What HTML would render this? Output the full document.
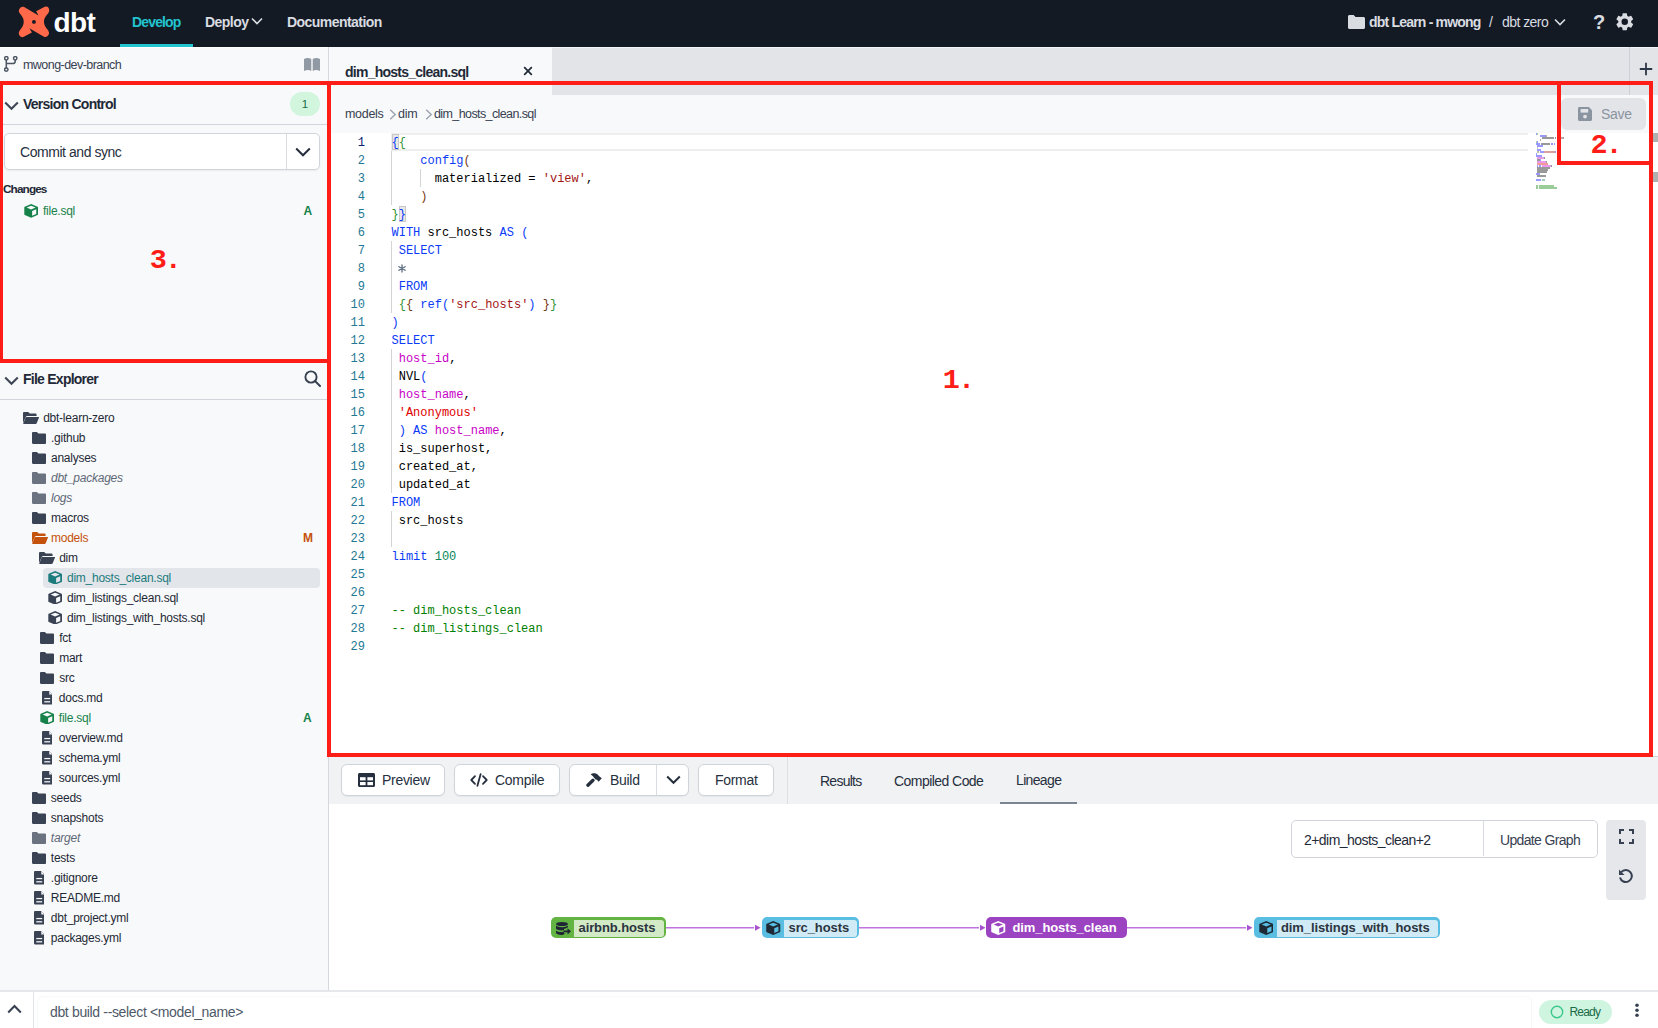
<!DOCTYPE html>
<html><head><meta charset="utf-8">
<style>
*{box-sizing:border-box;margin:0;padding:0}
html,body{width:1658px;height:1028px;overflow:hidden;background:#fff}
body{position:relative;font-family:"Liberation Sans",sans-serif;color:#1f2937}
.a{position:absolute;white-space:nowrap}
.mono{font-family:"Liberation Mono",monospace}
svg{display:block}
/* NAV */
#nav{left:0;top:0;width:1658px;height:47px;background:#131a24}
.navt{font-size:14px;font-weight:bold;color:#d9dce1;letter-spacing:-0.55px;top:13.5px;line-height:16px}
/* sidebar */
#side{left:0;top:47px;width:329px;height:944px;background:#f8f9fa;border-right:1px solid #d5d9de}
.row{position:absolute;left:0;height:20px;width:328px;font-size:12px;line-height:20px;color:#1f2937;letter-spacing:-0.25px;white-space:nowrap}
.row .ic{position:absolute;top:3px}
.row .tx{position:absolute;top:0}
.fold{fill:#3a4353}
.foldi{fill:#6b7380}
/* editor */
.ln{position:absolute;padding-top:1px;left:329px;width:36px;text-align:right;font-size:12px;line-height:18px;color:#237893;font-family:"Liberation Mono",monospace}
.cl{position:absolute;padding-top:1px;left:391.5px;font-size:12px;line-height:18px;color:#000;font-family:"Liberation Mono",monospace;white-space:pre}
.kw{color:#0b3bf7}
.st{color:#a31515}
.br{color:#319331}
.pa{color:#7b3814}
.id{color:#c700c7}
.sr{color:#e00000}
.nu{color:#098658}
.cm{color:#008000}
.gr{color:#777}
.btn{position:absolute;top:764px;height:32px;background:#fff;border:1px solid #cfd4da;border-radius:6px;box-shadow:0 1px 1px rgba(0,0,0,.05)}
.bt{position:absolute;top:7px;font-size:14px;line-height:16px;color:#262f3d;letter-spacing:-0.3px;white-space:nowrap}
.red{position:absolute;background:#ff1d17}
</style></head>
<body>

<!-- ================= NAV ================= -->
<div id="nav" class="a">
  <svg class="a" style="left:14px;top:2px" width="40" height="40" viewBox="0 0 1028 1028"><path fill="#ff694a" d="M250 125L630 345L570 240L790 125Q880 90 905 200Q910 250 880 290Q660 510 880 730Q915 790 890 840Q840 920 770 895L395 675L460 785L240 900Q160 920 130 840Q110 790 145 730Q355 510 145 290Q110 240 130 190Q170 100 250 125Z"/><circle cx="512" cy="512" r="50" fill="#131a24"/></svg>
  <div class="a" style="left:53.5px;top:6px;font-size:28px;font-weight:bold;color:#fff;letter-spacing:-0.6px;line-height:34px">dbt</div>
  <div class="a navt" style="left:132px;color:#22c4cf;letter-spacing:-0.85px">Develop</div>
  <div class="a" style="left:120px;top:44px;width:73px;height:3px;background:#22c4cf"></div>
  <div class="a navt" style="left:205px">Deploy</div>
  <svg class="a" style="left:251px;top:17px" width="12" height="8" viewBox="0 0 12 8"><path d="M1 1.5 L6 6.5 L11 1.5" stroke="#d9dce1" stroke-width="1.6" fill="none"/></svg>
  <div class="a navt" style="left:287px">Documentation</div>

  <svg class="a" style="left:1348px;top:15px" width="17" height="14" viewBox="0 0 17 14"><path fill="#d9dce1" d="M0 1.5C0 .7.7 0 1.5 0h4.2l1.8 2h8C16.3 2 17 2.7 17 3.5v9c0 .8-.7 1.5-1.5 1.5h-14C.7 14 0 13.3 0 12.5z"/></svg>
  <div class="a navt" style="left:1369px;letter-spacing:-0.8px">dbt Learn - mwong</div>
  <div class="a navt" style="left:1489px;font-weight:normal">/</div>
  <div class="a navt" style="left:1502px;font-weight:normal">dbt zero</div>
  <svg class="a" style="left:1554px;top:18px" width="12" height="8" viewBox="0 0 12 8"><path d="M1 1.5 L6 6.5 L11 1.5" stroke="#d9dce1" stroke-width="1.6" fill="none"/></svg>
  <div class="a" style="left:1593px;top:11px;font-size:20px;font-weight:bold;color:#d9dce1;line-height:22px">?</div>
  <svg class="a" style="left:1614px;top:11px" width="21.5" height="21.5" viewBox="0 0 24 24"><path fill="#d9dce1" d="M19.14 12.94c.04-.3.06-.61.06-.94 0-.32-.02-.64-.07-.94l2.03-1.58a.49.49 0 0 0 .12-.61l-1.92-3.32a.49.49 0 0 0-.59-.22l-2.39.96c-.5-.38-1.03-.7-1.62-.94l-.36-2.54a.48.48 0 0 0-.48-.41h-3.84c-.24 0-.43.17-.47.41l-.36 2.54c-.59.24-1.13.57-1.62.94l-2.39-.96a.47.47 0 0 0-.59.22L2.74 8.87c-.12.21-.08.47.12.61l2.03 1.58c-.05.3-.09.63-.09.94s.02.64.07.94l-2.03 1.58a.49.49 0 0 0-.12.61l1.92 3.32c.12.22.37.29.59.22l2.39-.96c.5.38 1.03.7 1.62.94l.36 2.54c.05.24.24.41.48.41h3.84c.24 0 .44-.17.47-.41l.36-2.54c.59-.24 1.13-.56 1.62-.94l2.39.96c.22.08.47 0 .59-.22l1.92-3.32c.12-.22.07-.47-.12-.61l-2.01-1.58zM12 15.6A3.6 3.6 0 1 1 12 8.4a3.6 3.6 0 0 1 0 7.2z"/></svg>
</div>

<!-- ================= SIDEBAR ================= -->
<div id="side" class="a">
  <div class="a" style="left:0;top:0;width:328px;height:1px;background:#fff"></div>
  <svg class="a" style="left:4px;top:9px" width="14" height="17" viewBox="0 0 14 17"><g fill="none" stroke="#4b5563" stroke-width="1.5"><circle cx="2.3" cy="2.3" r="1.7"/><circle cx="2.3" cy="13.6" r="1.7"/><circle cx="11.2" cy="2.3" r="1.7"/><path d="M2.3 4v7.9M11.2 4v1.2Q11.2 7.6 8.6 7.6H2.3"/></g></svg>
  <div class="a" style="left:23px;top:11px;font-size:12.5px;line-height:14px;color:#374151;letter-spacing:-0.55px">mwong-dev-branch</div>
  <svg class="a" style="left:304px;top:11px" width="16" height="13" viewBox="0 0 16 13"><path fill="#9199a4" d="M0 1C2.5-.2 5-.2 7.3 1v12C5 11.8 2.5 11.8 0 13z"/><path fill="#9199a4" d="M16 1c-2.5-1.2-5-1.2-7.3 0v12c2.3-1.2 4.8-1.2 7.3 0z"/></svg>

  <!-- Version control -->
  <svg class="a" style="left:3.5px;top:53.5px" width="15" height="10" viewBox="0 0 15 10"><path d="M1.2 1.5l6.3 6.3 6.3-6.3" stroke="#3f4857" stroke-width="2.1" fill="none"/></svg>
  <div class="a" style="left:23px;top:49px;font-size:14px;font-weight:bold;line-height:16px;color:#1f2937;letter-spacing:-0.75px">Version Control</div>
  <div class="a" style="left:290px;top:45px;width:30px;height:24px;border-radius:12px;background:#d2f5de;font-size:11.5px;line-height:24px;text-align:center;color:#1d6b45">1</div>
  <div class="a" style="left:3px;top:77px;width:325px;height:1px;background:#d1d5db"></div>
  <div class="a" style="left:3.5px;top:86px;width:316px;height:37px;background:#fff;border:1px solid #d1d5db;border-radius:5px;box-shadow:0 1px 2px rgba(0,0,0,.06)"></div>
  <div class="a" style="left:286px;top:87px;width:1px;height:35px;background:#d8dce1"></div>
  <div class="a" style="left:20px;top:97px;font-size:14px;line-height:16px;color:#262f3d;letter-spacing:-0.45px">Commit and sync</div>
  <svg class="a" style="left:295px;top:100px" width="16" height="10" viewBox="0 0 16 10"><path d="M1.2 1.5l6.8 6.8 6.8-6.8" stroke="#262f3d" stroke-width="2" fill="none"/></svg>
  <div class="a" style="left:3px;top:135px;font-size:11.8px;font-weight:bold;line-height:14px;color:#1f2937;letter-spacing:-0.9px">Changes</div>
  <svg class="a" style="left:24px;top:157px" width="14.3" height="13.7" viewBox="0 0 14 14"><path fill="#16824a" d="M7 0L13.5 2.8Q14 3 14 3.6V10.4Q14 11 13.5 11.2L7 14L.5 11.2Q0 11 0 10.4V3.6Q0 3 .5 2.8z"/><path fill="#f8f9fa" d="M7 1.7L11.6 3.6L7 5.5L2.4 3.6z"/><path fill="#f8f9fa" d="M8 7.2L12.2 5.4V10.2L8 12.1z"/></svg>
  <div class="a" style="left:43px;top:157px;font-size:12px;line-height:14px;color:#16824a;letter-spacing:-0.25px">file.sql</div>
  <div class="a" style="left:303.5px;top:157px;font-size:12px;font-weight:bold;line-height:14px;color:#16824a">A</div>
  <div class="a" style="left:149.7px;top:199.3px;font-family:'Liberation Mono',monospace;font-weight:bold;font-size:28.5px;line-height:30px;letter-spacing:-2px;color:#ff1d17">3.</div>

  <!-- File explorer -->
  <svg class="a" style="left:3.5px;top:328.5px" width="15" height="10" viewBox="0 0 15 10"><path d="M1.2 1.5l6.3 6.3 6.3-6.3" stroke="#3f4857" stroke-width="2.1" fill="none"/></svg>
  <div class="a" style="left:23px;top:324px;font-size:14px;font-weight:bold;line-height:16px;color:#1f2937;letter-spacing:-0.75px">File Explorer</div>
  <svg class="a" style="left:304px;top:323px" width="17" height="17" viewBox="0 0 17 17"><circle cx="7" cy="7" r="5.6" stroke="#374151" stroke-width="1.9" fill="none"/><path d="M11 11l5 5" stroke="#374151" stroke-width="2" stroke-linecap="round"/></svg>
  <div class="a" style="left:0;top:352px;width:328px;height:1px;background:#d1d5db"></div>
<div class="row" style="top:361px"><div class="ic" style="left:22.8px;top:4px"><svg width="16" height="12" viewBox="0 0 16 12"><path fill="#3a4353" d="M0 1.2C0 .5.5 0 1.2 0h4l1.6 1.6h5.6c.7 0 1.2.5 1.2 1.2V4H4.2c-.6 0-1.1.3-1.3.8L0 11z"/><path fill="#3a4353" d="M3.4 5h12.2c.3 0 .5.3.4.6l-2.3 5.7c-.2.4-.6.7-1.1.7H.6c-.3 0-.5-.3-.4-.6l2.3-5.7C2.7 5.2 3 5 3.4 5z"/></svg></div><div class="tx" style="left:43.2px;">dbt-learn-zero</div></div>
<div class="row" style="top:381px"><div class="ic" style="left:31.5px;top:4px"><svg width="14.2" height="12" viewBox="0 0 15 12" preserveAspectRatio="none"><path fill="#3a4353" d="M0 1.2C0 .5.5 0 1.2 0h4l1.6 1.6h7C14.5 1.6 15 2.1 15 2.8v8C15 11.5 14.5 12 13.8 12H1.2C.5 12 0 11.5 0 10.8z"/></svg></div><div class="tx" style="left:51.0px;">.github</div></div>
<div class="row" style="top:401px"><div class="ic" style="left:31.5px;top:4px"><svg width="14.2" height="12" viewBox="0 0 15 12" preserveAspectRatio="none"><path fill="#3a4353" d="M0 1.2C0 .5.5 0 1.2 0h4l1.6 1.6h7C14.5 1.6 15 2.1 15 2.8v8C15 11.5 14.5 12 13.8 12H1.2C.5 12 0 11.5 0 10.8z"/></svg></div><div class="tx" style="left:51.0px;">analyses</div></div>
<div class="row" style="top:421px"><div class="ic" style="left:31.5px;top:4px"><svg width="14.2" height="12" viewBox="0 0 15 12" preserveAspectRatio="none"><path fill="#6b7380" d="M0 1.2C0 .5.5 0 1.2 0h4l1.6 1.6h7C14.5 1.6 15 2.1 15 2.8v8C15 11.5 14.5 12 13.8 12H1.2C.5 12 0 11.5 0 10.8z"/></svg></div><div class="tx" style="left:51.0px;font-style:italic;color:#5f6877">dbt_packages</div></div>
<div class="row" style="top:441px"><div class="ic" style="left:31.5px;top:4px"><svg width="14.2" height="12" viewBox="0 0 15 12" preserveAspectRatio="none"><path fill="#6b7380" d="M0 1.2C0 .5.5 0 1.2 0h4l1.6 1.6h7C14.5 1.6 15 2.1 15 2.8v8C15 11.5 14.5 12 13.8 12H1.2C.5 12 0 11.5 0 10.8z"/></svg></div><div class="tx" style="left:51.0px;font-style:italic;color:#5f6877">logs</div></div>
<div class="row" style="top:461px"><div class="ic" style="left:31.5px;top:4px"><svg width="14.2" height="12" viewBox="0 0 15 12" preserveAspectRatio="none"><path fill="#3a4353" d="M0 1.2C0 .5.5 0 1.2 0h4l1.6 1.6h7C14.5 1.6 15 2.1 15 2.8v8C15 11.5 14.5 12 13.8 12H1.2C.5 12 0 11.5 0 10.8z"/></svg></div><div class="tx" style="left:51.0px;">macros</div></div>
<div class="row" style="top:481px"><div class="ic" style="left:31.5px;top:4px"><svg width="16" height="12" viewBox="0 0 16 12"><path fill="#c4510c" d="M0 1.2C0 .5.5 0 1.2 0h4l1.6 1.6h5.6c.7 0 1.2.5 1.2 1.2V4H4.2c-.6 0-1.1.3-1.3.8L0 11z"/><path fill="#c4510c" d="M3.4 5h12.2c.3 0 .5.3.4.6l-2.3 5.7c-.2.4-.6.7-1.1.7H.6c-.3 0-.5-.3-.4-.6l2.3-5.7C2.7 5.2 3 5 3.4 5z"/></svg></div><div class="tx" style="left:51.0px;color:#c4510c">models</div><div class="tx" style="left:303px;font-weight:bold;color:#c4510c">M</div></div>
<div class="row" style="top:501px"><div class="ic" style="left:38.8px;top:4px"><svg width="16" height="12" viewBox="0 0 16 12"><path fill="#3a4353" d="M0 1.2C0 .5.5 0 1.2 0h4l1.6 1.6h5.6c.7 0 1.2.5 1.2 1.2V4H4.2c-.6 0-1.1.3-1.3.8L0 11z"/><path fill="#3a4353" d="M3.4 5h12.2c.3 0 .5.3.4.6l-2.3 5.7c-.2.4-.6.7-1.1.7H.6c-.3 0-.5-.3-.4-.6l2.3-5.7C2.7 5.2 3 5 3.4 5z"/></svg></div><div class="tx" style="left:59.2px;">dim</div></div>
<div class="row" style="top:521px"><div style="position:absolute;left:43px;top:0;width:277px;height:20px;background:#e2e5e9;border-radius:4px"></div><div class="ic" style="left:47.6px;top:2.5px"><svg width="14.3" height="13.7" viewBox="0 0 14 14"><path fill="#1b7b7d" d="M7 0L13.5 2.8Q14 3 14 3.6V10.4Q14 11 13.5 11.2L7 14L.5 11.2Q0 11 0 10.4V3.6Q0 3 .5 2.8z"/><path fill="#e2e5e9" d="M7 1.7L11.6 3.6L7 5.5L2.4 3.6z"/><path fill="#e2e5e9" d="M8 7.2L12.2 5.4V10.2L8 12.1z"/></svg></div><div class="tx" style="left:67.0px;color:#1b7b7d">dim_hosts_clean.sql</div></div>
<div class="row" style="top:541px"><div class="ic" style="left:47.6px;top:2.5px"><svg width="14.3" height="13.7" viewBox="0 0 14 14"><path fill="#3a4353" d="M7 0L13.5 2.8Q14 3 14 3.6V10.4Q14 11 13.5 11.2L7 14L.5 11.2Q0 11 0 10.4V3.6Q0 3 .5 2.8z"/><path fill="#f8f9fa" d="M7 1.7L11.6 3.6L7 5.5L2.4 3.6z"/><path fill="#f8f9fa" d="M8 7.2L12.2 5.4V10.2L8 12.1z"/></svg></div><div class="tx" style="left:67.0px;">dim_listings_clean.sql</div></div>
<div class="row" style="top:561px"><div class="ic" style="left:47.6px;top:2.5px"><svg width="14.3" height="13.7" viewBox="0 0 14 14"><path fill="#3a4353" d="M7 0L13.5 2.8Q14 3 14 3.6V10.4Q14 11 13.5 11.2L7 14L.5 11.2Q0 11 0 10.4V3.6Q0 3 .5 2.8z"/><path fill="#f8f9fa" d="M7 1.7L11.6 3.6L7 5.5L2.4 3.6z"/><path fill="#f8f9fa" d="M8 7.2L12.2 5.4V10.2L8 12.1z"/></svg></div><div class="tx" style="left:67.0px;">dim_listings_with_hosts.sql</div></div>
<div class="row" style="top:581px"><div class="ic" style="left:40.3px;top:4px"><svg width="14.2" height="12" viewBox="0 0 15 12" preserveAspectRatio="none"><path fill="#3a4353" d="M0 1.2C0 .5.5 0 1.2 0h4l1.6 1.6h7C14.5 1.6 15 2.1 15 2.8v8C15 11.5 14.5 12 13.8 12H1.2C.5 12 0 11.5 0 10.8z"/></svg></div><div class="tx" style="left:59.2px;">fct</div></div>
<div class="row" style="top:601px"><div class="ic" style="left:40.3px;top:4px"><svg width="14.2" height="12" viewBox="0 0 15 12" preserveAspectRatio="none"><path fill="#3a4353" d="M0 1.2C0 .5.5 0 1.2 0h4l1.6 1.6h7C14.5 1.6 15 2.1 15 2.8v8C15 11.5 14.5 12 13.8 12H1.2C.5 12 0 11.5 0 10.8z"/></svg></div><div class="tx" style="left:59.2px;">mart</div></div>
<div class="row" style="top:621px"><div class="ic" style="left:40.3px;top:4px"><svg width="14.2" height="12" viewBox="0 0 15 12" preserveAspectRatio="none"><path fill="#3a4353" d="M0 1.2C0 .5.5 0 1.2 0h4l1.6 1.6h7C14.5 1.6 15 2.1 15 2.8v8C15 11.5 14.5 12 13.8 12H1.2C.5 12 0 11.5 0 10.8z"/></svg></div><div class="tx" style="left:59.2px;">src</div></div>
<div class="row" style="top:641px"><div class="ic" style="left:41.7px;top:3px"><svg width="10.5" height="13.5" viewBox="0 0 11 14"><path fill="#3a4353" d="M1.3 0h6L11 3.7v9c0 .7-.6 1.3-1.3 1.3H1.3C.6 14 0 13.4 0 12.7V1.3C0 .6.6 0 1.3 0z"/><path fill="#f8f9fa" d="M7.6 0.3v3.2h3.1z"/><rect x="2.4" y="7.2" width="6.2" height="1.3" fill="#f8f9fa"/><rect x="2.4" y="10.6" width="6.2" height="1.3" fill="#f8f9fa"/></svg></div><div class="tx" style="left:58.8px;">docs.md</div></div>
<div class="row" style="top:661px"><div class="ic" style="left:40.3px;top:2.5px"><svg width="14.3" height="13.7" viewBox="0 0 14 14"><path fill="#16824a" d="M7 0L13.5 2.8Q14 3 14 3.6V10.4Q14 11 13.5 11.2L7 14L.5 11.2Q0 11 0 10.4V3.6Q0 3 .5 2.8z"/><path fill="#f8f9fa" d="M7 1.7L11.6 3.6L7 5.5L2.4 3.6z"/><path fill="#f8f9fa" d="M8 7.2L12.2 5.4V10.2L8 12.1z"/></svg></div><div class="tx" style="left:58.8px;color:#16824a">file.sql</div><div class="tx" style="left:303px;font-weight:bold;color:#16824a">A</div></div>
<div class="row" style="top:681px"><div class="ic" style="left:41.7px;top:3px"><svg width="10.5" height="13.5" viewBox="0 0 11 14"><path fill="#3a4353" d="M1.3 0h6L11 3.7v9c0 .7-.6 1.3-1.3 1.3H1.3C.6 14 0 13.4 0 12.7V1.3C0 .6.6 0 1.3 0z"/><path fill="#f8f9fa" d="M7.6 0.3v3.2h3.1z"/><rect x="2.4" y="7.2" width="6.2" height="1.3" fill="#f8f9fa"/><rect x="2.4" y="10.6" width="6.2" height="1.3" fill="#f8f9fa"/></svg></div><div class="tx" style="left:58.8px;">overview.md</div></div>
<div class="row" style="top:701px"><div class="ic" style="left:41.7px;top:3px"><svg width="10.5" height="13.5" viewBox="0 0 11 14"><path fill="#3a4353" d="M1.3 0h6L11 3.7v9c0 .7-.6 1.3-1.3 1.3H1.3C.6 14 0 13.4 0 12.7V1.3C0 .6.6 0 1.3 0z"/><path fill="#f8f9fa" d="M7.6 0.3v3.2h3.1z"/><rect x="2.4" y="7.2" width="6.2" height="1.3" fill="#f8f9fa"/><rect x="2.4" y="10.6" width="6.2" height="1.3" fill="#f8f9fa"/></svg></div><div class="tx" style="left:58.8px;">schema.yml</div></div>
<div class="row" style="top:721px"><div class="ic" style="left:41.7px;top:3px"><svg width="10.5" height="13.5" viewBox="0 0 11 14"><path fill="#3a4353" d="M1.3 0h6L11 3.7v9c0 .7-.6 1.3-1.3 1.3H1.3C.6 14 0 13.4 0 12.7V1.3C0 .6.6 0 1.3 0z"/><path fill="#f8f9fa" d="M7.6 0.3v3.2h3.1z"/><rect x="2.4" y="7.2" width="6.2" height="1.3" fill="#f8f9fa"/><rect x="2.4" y="10.6" width="6.2" height="1.3" fill="#f8f9fa"/></svg></div><div class="tx" style="left:58.8px;">sources.yml</div></div>
<div class="row" style="top:741px"><div class="ic" style="left:31.8px;top:4px"><svg width="14.2" height="12" viewBox="0 0 15 12" preserveAspectRatio="none"><path fill="#3a4353" d="M0 1.2C0 .5.5 0 1.2 0h4l1.6 1.6h7C14.5 1.6 15 2.1 15 2.8v8C15 11.5 14.5 12 13.8 12H1.2C.5 12 0 11.5 0 10.8z"/></svg></div><div class="tx" style="left:50.8px;">seeds</div></div>
<div class="row" style="top:761px"><div class="ic" style="left:31.8px;top:4px"><svg width="14.2" height="12" viewBox="0 0 15 12" preserveAspectRatio="none"><path fill="#3a4353" d="M0 1.2C0 .5.5 0 1.2 0h4l1.6 1.6h7C14.5 1.6 15 2.1 15 2.8v8C15 11.5 14.5 12 13.8 12H1.2C.5 12 0 11.5 0 10.8z"/></svg></div><div class="tx" style="left:50.8px;">snapshots</div></div>
<div class="row" style="top:781px"><div class="ic" style="left:31.8px;top:4px"><svg width="14.2" height="12" viewBox="0 0 15 12" preserveAspectRatio="none"><path fill="#6b7380" d="M0 1.2C0 .5.5 0 1.2 0h4l1.6 1.6h7C14.5 1.6 15 2.1 15 2.8v8C15 11.5 14.5 12 13.8 12H1.2C.5 12 0 11.5 0 10.8z"/></svg></div><div class="tx" style="left:50.8px;font-style:italic;color:#5f6877">target</div></div>
<div class="row" style="top:801px"><div class="ic" style="left:31.8px;top:4px"><svg width="14.2" height="12" viewBox="0 0 15 12" preserveAspectRatio="none"><path fill="#3a4353" d="M0 1.2C0 .5.5 0 1.2 0h4l1.6 1.6h7C14.5 1.6 15 2.1 15 2.8v8C15 11.5 14.5 12 13.8 12H1.2C.5 12 0 11.5 0 10.8z"/></svg></div><div class="tx" style="left:50.8px;">tests</div></div>
<div class="row" style="top:821px"><div class="ic" style="left:33.8px;top:3px"><svg width="10.5" height="13.5" viewBox="0 0 11 14"><path fill="#3a4353" d="M1.3 0h6L11 3.7v9c0 .7-.6 1.3-1.3 1.3H1.3C.6 14 0 13.4 0 12.7V1.3C0 .6.6 0 1.3 0z"/><path fill="#f8f9fa" d="M7.6 0.3v3.2h3.1z"/><rect x="2.4" y="7.2" width="6.2" height="1.3" fill="#f8f9fa"/><rect x="2.4" y="10.6" width="6.2" height="1.3" fill="#f8f9fa"/></svg></div><div class="tx" style="left:50.8px;">.gitignore</div></div>
<div class="row" style="top:841px"><div class="ic" style="left:33.8px;top:3px"><svg width="10.5" height="13.5" viewBox="0 0 11 14"><path fill="#3a4353" d="M1.3 0h6L11 3.7v9c0 .7-.6 1.3-1.3 1.3H1.3C.6 14 0 13.4 0 12.7V1.3C0 .6.6 0 1.3 0z"/><path fill="#f8f9fa" d="M7.6 0.3v3.2h3.1z"/><rect x="2.4" y="7.2" width="6.2" height="1.3" fill="#f8f9fa"/><rect x="2.4" y="10.6" width="6.2" height="1.3" fill="#f8f9fa"/></svg></div><div class="tx" style="left:50.8px;">README.md</div></div>
<div class="row" style="top:861px"><div class="ic" style="left:33.8px;top:3px"><svg width="10.5" height="13.5" viewBox="0 0 11 14"><path fill="#3a4353" d="M1.3 0h6L11 3.7v9c0 .7-.6 1.3-1.3 1.3H1.3C.6 14 0 13.4 0 12.7V1.3C0 .6.6 0 1.3 0z"/><path fill="#f8f9fa" d="M7.6 0.3v3.2h3.1z"/><rect x="2.4" y="7.2" width="6.2" height="1.3" fill="#f8f9fa"/><rect x="2.4" y="10.6" width="6.2" height="1.3" fill="#f8f9fa"/></svg></div><div class="tx" style="left:50.8px;">dbt_project.yml</div></div>
<div class="row" style="top:881px"><div class="ic" style="left:33.8px;top:3px"><svg width="10.5" height="13.5" viewBox="0 0 11 14"><path fill="#3a4353" d="M1.3 0h6L11 3.7v9c0 .7-.6 1.3-1.3 1.3H1.3C.6 14 0 13.4 0 12.7V1.3C0 .6.6 0 1.3 0z"/><path fill="#f8f9fa" d="M7.6 0.3v3.2h3.1z"/><rect x="2.4" y="7.2" width="6.2" height="1.3" fill="#f8f9fa"/><rect x="2.4" y="10.6" width="6.2" height="1.3" fill="#f8f9fa"/></svg></div><div class="tx" style="left:50.8px;">packages.yml</div></div>
</div>


<!-- ================= MAIN ================= -->
<div class="a" style="left:329px;top:47px;width:1329px;height:48px;background:#e2e4e8"></div>
<div class="a" style="left:329px;top:47px;width:1329px;height:1px;background:#f3f4f6"></div>
<div class="a" style="left:329px;top:47px;width:223px;height:48px;background:#f8f9fa"></div>
<div class="a" style="left:345px;top:64px;font-size:14px;font-weight:bold;line-height:16px;color:#1f2937;letter-spacing:-0.75px">dim_hosts_clean.sql</div>
<svg class="a" style="left:523px;top:66px" width="10" height="10" viewBox="0 0 10 10"><path d="M1.2 1.2l7.6 7.6M8.8 1.2l-7.6 7.6" stroke="#1f2937" stroke-width="1.7"/></svg>
<div class="a" style="left:1629px;top:47px;width:1px;height:48px;background:#cdd1d7"></div>
<svg class="a" style="left:1639px;top:62px" width="14" height="14" viewBox="0 0 14 14"><path d="M7 .8v12.4M.8 7h12.4" stroke="#2d3748" stroke-width="1.8"/></svg>

<!-- breadcrumb bar -->
<div class="a" style="left:329px;top:95px;width:1329px;height:38px;background:#f8f9fa"></div>
<div class="a" style="left:345px;top:107px;font-size:12.5px;line-height:14px;color:#374151;letter-spacing:-0.3px">models</div>
<svg class="a" style="left:389px;top:109px" width="8" height="11" viewBox="0 0 8 11"><path d="M1.2 .8l5 4.7-5 4.7" stroke="#9ca3af" stroke-width="1.4" fill="none"/></svg>
<div class="a" style="left:398px;top:107px;font-size:12.5px;line-height:14px;color:#374151;letter-spacing:-0.3px">dim</div>
<svg class="a" style="left:425px;top:109px" width="8" height="11" viewBox="0 0 8 11"><path d="M1.2 .8l5 4.7-5 4.7" stroke="#9ca3af" stroke-width="1.4" fill="none"/></svg>
<div class="a" style="left:434px;top:107px;font-size:12.5px;line-height:14px;color:#374151;letter-spacing:-0.6px">dim_hosts_clean.sql</div>

<!-- save -->
<div class="a" style="left:1561px;top:98px;width:85px;height:32px;background:#e2e4e8;border-radius:6px"></div>
<svg class="a" style="left:1578px;top:107px" width="14" height="14" viewBox="0 0 14 14"><path fill="#8a93a0" d="M1.5 0h9.3L14 3.2v9.3c0 .8-.7 1.5-1.5 1.5h-11C.7 14 0 13.3 0 12.5v-11C0 .7.7 0 1.5 0z"/><rect x="2.6" y="2" width="7.6" height="3.6" fill="#e2e4e8"/><circle cx="7" cy="9.6" r="1.9" fill="#e2e4e8"/></svg>
<div class="a" style="left:1601px;top:106px;font-size:14px;line-height:16px;color:#8a93a0;letter-spacing:-0.3px">Save</div>

<!-- editor -->
<div class="a" style="left:329px;top:133px;width:1329px;height:624px;background:#fff"></div>
<div class="a" style="left:391px;top:133px;width:1137px;height:18px;border:2px solid #eeeeee;border-right:none"></div>
<div class="a" style="left:391.5px;top:134px;width:7px;height:16px;background:#e8e8e8;border:1px solid #c8c8c8"></div>
<div class="a" style="left:398.7px;top:206px;width:7px;height:16px;background:#e8e8e8;border:1px solid #c8c8c8"></div>
<div class="ln" style="top:133px;color:#0b216f">1</div>
<div class="cl" style="top:133px"><span class="bx kw">{</span><span class="br">{</span></div>
<div class="ln" style="top:151px;color:#237893">2</div>
<div class="cl" style="top:151px">    <span class="kw">config</span><span class="pa">(</span></div>
<div class="ln" style="top:169px;color:#237893">3</div>
<div class="cl" style="top:169px">      materialized = <span class="st">'view'</span>,</div>
<div class="ln" style="top:187px;color:#237893">4</div>
<div class="cl" style="top:187px">    <span class="pa">)</span></div>
<div class="ln" style="top:205px;color:#237893">5</div>
<div class="cl" style="top:205px"><span class="br">}</span><span class="bx kw">}</span></div>
<div class="ln" style="top:223px;color:#237893">6</div>
<div class="cl" style="top:223px"><span class="kw">WITH</span> src_hosts <span class="kw">AS</span> <span class="kw">(</span></div>
<div class="ln" style="top:241px;color:#237893">7</div>
<div class="cl" style="top:241px"> <span class="kw">SELECT</span></div>
<div class="ln" style="top:259px;color:#237893">8</div>
<div class="cl" style="top:259px"> </div>
<div class="ln" style="top:277px;color:#237893">9</div>
<div class="cl" style="top:277px"> <span class="kw">FROM</span></div>
<div class="ln" style="top:295px;color:#237893">10</div>
<div class="cl" style="top:295px"> <span class="br">{</span><span class="pa">{</span> <span class="kw">ref(</span><span class="st">'src_hosts'</span><span class="kw">)</span> <span class="pa">}</span><span class="br">}</span></div>
<div class="ln" style="top:313px;color:#237893">11</div>
<div class="cl" style="top:313px"><span class="kw">)</span></div>
<div class="ln" style="top:331px;color:#237893">12</div>
<div class="cl" style="top:331px"><span class="kw">SELECT</span></div>
<div class="ln" style="top:349px;color:#237893">13</div>
<div class="cl" style="top:349px"> <span class="id">host_id</span>,</div>
<div class="ln" style="top:367px;color:#237893">14</div>
<div class="cl" style="top:367px"> NVL<span class="kw">(</span></div>
<div class="ln" style="top:385px;color:#237893">15</div>
<div class="cl" style="top:385px"> <span class="id">host_name</span>,</div>
<div class="ln" style="top:403px;color:#237893">16</div>
<div class="cl" style="top:403px"> <span class="sr">'Anonymous'</span></div>
<div class="ln" style="top:421px;color:#237893">17</div>
<div class="cl" style="top:421px"> <span class="kw">)</span> <span class="kw">AS</span> <span class="id">host_name</span>,</div>
<div class="ln" style="top:439px;color:#237893">18</div>
<div class="cl" style="top:439px"> is_superhost,</div>
<div class="ln" style="top:457px;color:#237893">19</div>
<div class="cl" style="top:457px"> created_at,</div>
<div class="ln" style="top:475px;color:#237893">20</div>
<div class="cl" style="top:475px"> updated_at</div>
<div class="ln" style="top:493px;color:#237893">21</div>
<div class="cl" style="top:493px"><span class="kw">FROM</span></div>
<div class="ln" style="top:511px;color:#237893">22</div>
<div class="cl" style="top:511px"> src_hosts</div>
<div class="ln" style="top:529px;color:#237893">23</div>
<div class="ln" style="top:547px;color:#237893">24</div>
<div class="cl" style="top:547px"><span class="kw">limit</span> <span class="nu">100</span></div>
<div class="ln" style="top:565px;color:#237893">25</div>
<div class="ln" style="top:583px;color:#237893">26</div>
<div class="ln" style="top:601px;color:#237893">27</div>
<div class="cl" style="top:601px"><span class="cm">-- dim_hosts_clean</span></div>
<div class="ln" style="top:619px;color:#237893">28</div>
<div class="cl" style="top:619px"><span class="cm">-- dim_listings_clean</span></div>
<div class="ln" style="top:637px;color:#237893">29</div>
<div class="a" style="left:391.0px;top:151px;width:1px;height:54px;background:#d4d4d4"></div>
<div class="a" style="left:419.8px;top:169px;width:1px;height:18px;background:#d4d4d4"></div>
<div class="a" style="left:391.0px;top:241px;width:1px;height:72px;background:#d4d4d4"></div>
<div class="a" style="left:391.0px;top:349px;width:1px;height:144px;background:#d4d4d4"></div>
<div class="a" style="left:391.0px;top:511px;width:1px;height:36px;background:#d4d4d4"></div>
<svg class="a" style="left:397.8px;top:263.6px" width="8" height="9" viewBox="0 0 8 9"><g stroke="#5a6b80" stroke-width="1.3" stroke-linecap="round"><path d="M4 .9v7.2M.9 2.7l6.2 3.6M.9 6.3l6.2-3.6"/></g></svg>
<!-- minimap -->
<div id="minimap" class="a" style="left:1536px;top:133.3px;width:22px;height:58px"><div style="position:absolute;left:0px;top:0px;width:1px;height:1.6px;background:#0000ff;opacity:.4"></div>
<div style="position:absolute;left:1px;top:0px;width:1px;height:1.6px;background:#319331;opacity:.4"></div>
<div style="position:absolute;left:4px;top:2px;width:6px;height:1.6px;background:#0000ff;opacity:.4"></div>
<div style="position:absolute;left:10px;top:2px;width:1px;height:1.6px;background:#7b3814;opacity:.4"></div>
<div style="position:absolute;left:6px;top:4px;width:12px;height:1.6px;background:#000000;opacity:.4"></div>
<div style="position:absolute;left:19px;top:4px;width:1px;height:1.6px;background:#000000;opacity:.4"></div>
<div style="position:absolute;left:21px;top:4px;width:6px;height:1.6px;background:#a31515;opacity:.4"></div>
<div style="position:absolute;left:27px;top:4px;width:1px;height:1.6px;background:#000000;opacity:.4"></div>
<div style="position:absolute;left:4px;top:6px;width:1px;height:1.6px;background:#7b3814;opacity:.4"></div>
<div style="position:absolute;left:0px;top:8px;width:1px;height:1.6px;background:#319331;opacity:.4"></div>
<div style="position:absolute;left:1px;top:8px;width:1px;height:1.6px;background:#0000ff;opacity:.4"></div>
<div style="position:absolute;left:0px;top:10px;width:4px;height:1.6px;background:#0000ff;opacity:.4"></div>
<div style="position:absolute;left:5px;top:10px;width:9px;height:1.6px;background:#000000;opacity:.4"></div>
<div style="position:absolute;left:15px;top:10px;width:2px;height:1.6px;background:#0000ff;opacity:.4"></div>
<div style="position:absolute;left:18px;top:10px;width:1px;height:1.6px;background:#0000ff;opacity:.4"></div>
<div style="position:absolute;left:1px;top:12px;width:6px;height:1.6px;background:#0000ff;opacity:.4"></div>
<div style="position:absolute;left:1px;top:14px;width:1px;height:1.6px;background:#777777;opacity:.4"></div>
<div style="position:absolute;left:1px;top:16px;width:4px;height:1.6px;background:#0000ff;opacity:.4"></div>
<div style="position:absolute;left:1px;top:18px;width:1px;height:1.6px;background:#319331;opacity:.4"></div>
<div style="position:absolute;left:2px;top:18px;width:1px;height:1.6px;background:#7b3814;opacity:.4"></div>
<div style="position:absolute;left:4px;top:18px;width:4px;height:1.6px;background:#0000ff;opacity:.4"></div>
<div style="position:absolute;left:8px;top:18px;width:11px;height:1.6px;background:#a31515;opacity:.4"></div>
<div style="position:absolute;left:19px;top:18px;width:1px;height:1.6px;background:#0000ff;opacity:.4"></div>
<div style="position:absolute;left:21px;top:18px;width:1px;height:1.6px;background:#7b3814;opacity:.4"></div>
<div style="position:absolute;left:22px;top:18px;width:1px;height:1.6px;background:#319331;opacity:.4"></div>
<div style="position:absolute;left:0px;top:20px;width:1px;height:1.6px;background:#0000ff;opacity:.4"></div>
<div style="position:absolute;left:0px;top:22px;width:6px;height:1.6px;background:#0000ff;opacity:.4"></div>
<div style="position:absolute;left:1px;top:24px;width:7px;height:1.6px;background:#c700c7;opacity:.4"></div>
<div style="position:absolute;left:8px;top:24px;width:1px;height:1.6px;background:#000000;opacity:.4"></div>
<div style="position:absolute;left:1px;top:26px;width:3px;height:1.6px;background:#000000;opacity:.4"></div>
<div style="position:absolute;left:4px;top:26px;width:1px;height:1.6px;background:#0000ff;opacity:.4"></div>
<div style="position:absolute;left:1px;top:28px;width:9px;height:1.6px;background:#c700c7;opacity:.4"></div>
<div style="position:absolute;left:10px;top:28px;width:1px;height:1.6px;background:#000000;opacity:.4"></div>
<div style="position:absolute;left:1px;top:30px;width:11px;height:1.6px;background:#e00000;opacity:.4"></div>
<div style="position:absolute;left:1px;top:32px;width:1px;height:1.6px;background:#0000ff;opacity:.4"></div>
<div style="position:absolute;left:3px;top:32px;width:2px;height:1.6px;background:#0000ff;opacity:.4"></div>
<div style="position:absolute;left:6px;top:32px;width:9px;height:1.6px;background:#c700c7;opacity:.4"></div>
<div style="position:absolute;left:15px;top:32px;width:1px;height:1.6px;background:#000000;opacity:.4"></div>
<div style="position:absolute;left:1px;top:34px;width:13px;height:1.6px;background:#000000;opacity:.4"></div>
<div style="position:absolute;left:1px;top:36px;width:11px;height:1.6px;background:#000000;opacity:.4"></div>
<div style="position:absolute;left:1px;top:38px;width:10px;height:1.6px;background:#000000;opacity:.4"></div>
<div style="position:absolute;left:0px;top:40px;width:4px;height:1.6px;background:#0000ff;opacity:.4"></div>
<div style="position:absolute;left:1px;top:42px;width:9px;height:1.6px;background:#000000;opacity:.4"></div>
<div style="position:absolute;left:0px;top:46px;width:5px;height:1.6px;background:#0000ff;opacity:.4"></div>
<div style="position:absolute;left:6px;top:46px;width:3px;height:1.6px;background:#098658;opacity:.4"></div>
<div style="position:absolute;left:0px;top:52px;width:2px;height:1.6px;background:#008000;opacity:.4"></div>
<div style="position:absolute;left:3px;top:52px;width:15px;height:1.6px;background:#008000;opacity:.4"></div>
<div style="position:absolute;left:0px;top:54px;width:2px;height:1.6px;background:#008000;opacity:.4"></div>
<div style="position:absolute;left:3px;top:54px;width:18px;height:1.6px;background:#008000;opacity:.4"></div></div>
<div class="a" style="left:1653px;top:133px;width:5px;height:9px;background:#b0b0b0"></div>
<div class="a" style="left:1653px;top:172px;width:5px;height:10px;background:#b0b0b0"></div>

<!-- toolbar -->
<div class="a" style="left:329px;top:757px;width:1329px;height:47px;background:#f1f2f4"></div>
<div class="a" style="left:787px;top:757px;width:1px;height:47px;background:#dcdfe3"></div>
<div class="btn" style="left:341px;width:104px">
  <svg class="a" style="left:16px;top:8px" width="17" height="14" viewBox="0 0 17 14"><path fill="#262f3d" d="M1.5 0h14C16.3 0 17 .7 17 1.5v11c0 .8-.7 1.5-1.5 1.5h-14C.7 14 0 13.3 0 12.5v-11C0 .7.7 0 1.5 0z"/><rect x="2" y="4.2" width="5.6" height="3.2" fill="#fff"/><rect x="9.4" y="4.2" width="5.6" height="3.2" fill="#fff"/><rect x="2" y="9" width="5.6" height="3.2" fill="#fff"/><rect x="9.4" y="9" width="5.6" height="3.2" fill="#fff"/></svg>
  <div class="bt" style="left:40px">Preview</div>
</div>
<div class="btn" style="left:454px;width:106px">
  <svg class="a" style="left:15px;top:8px" width="18" height="14" viewBox="0 0 18 14"><path d="M5 3.2L1.3 7 5 10.8M13 3.2L16.7 7 13 10.8M10.6 1.2L7.4 12.8" stroke="#262f3d" stroke-width="1.8" fill="none" stroke-linecap="round" stroke-linejoin="round"/></svg>
  <div class="bt" style="left:40px">Compile</div>
</div>
<div class="btn" style="left:569px;width:120px">
  <svg class="a" style="left:16px;top:8px" width="16" height="14" viewBox="0 0 16 14"><path d="M1.9 12.2L7 7.3" stroke="#262f3d" stroke-width="3.3" stroke-linecap="round"/><path fill="#262f3d" d="M4.8 1.4C6.5 0 10.2-.3 12.3 2.3L13.2 3.3 15.8 5.3 12.6 8.7 11 6.8 9.6 6.6 7.9 4.6C7.3 3.5 6.2 2.3 4.8 1.4z"/></svg>
  <div class="bt" style="left:40px">Build</div>
  <div class="a" style="left:86px;top:0;width:1px;height:30px;background:#d8dce1"></div>
  <svg class="a" style="left:96px;top:10px" width="15" height="10" viewBox="0 0 15 10"><path d="M1.2 1.5l6.3 6.3 6.3-6.3" stroke="#262f3d" stroke-width="2" fill="none"/></svg>
</div>
<div class="btn" style="left:698px;width:76px">
  <div class="bt" style="left:16px">Format</div>
</div>
<div class="a" style="left:820px;top:772.5px;font-size:14px;line-height:16px;color:#262f3d;letter-spacing:-0.75px">Results</div>
<div class="a" style="left:894px;top:772.5px;font-size:14px;line-height:16px;color:#262f3d;letter-spacing:-0.55px">Compiled Code</div>
<div class="a" style="left:1016px;top:771.5px;font-size:14px;line-height:16px;color:#262f3d;letter-spacing:-0.65px">Lineage</div>
<div class="a" style="left:1000px;top:801.5px;width:77px;height:2.5px;background:#7b8491"></div>

<!-- lineage -->
<div class="a" style="left:329px;top:804px;width:1329px;height:186px;background:#fff"></div>
<div class="a" style="left:1291px;top:820px;width:307px;height:37.6px;background:#fff;border:1px solid #d1d5db;border-radius:5px"></div>
<div class="a" style="left:1483px;top:821px;width:1px;height:35px;background:#d8dce1"></div>
<div class="a" style="left:1304px;top:831.5px;font-size:14px;line-height:16px;color:#1f2937;letter-spacing:-0.55px">2+dim_hosts_clean+2</div>
<div class="a" style="left:1500px;top:831.5px;font-size:14px;line-height:16px;color:#374151;letter-spacing:-0.65px">Update Graph</div>
<div class="a" style="left:1606px;top:820px;width:40px;height:80px;background:#e5e7eb;border-radius:4px"></div>
<svg class="a" style="left:1619px;top:829px" width="15" height="15" viewBox="0 0 15 15"><path d="M1 5V1h4M10 1h4v4M14 10v4h-4M5 14H1v-4" stroke="#374151" stroke-width="2" fill="none"/></svg>
<svg class="a" style="left:1617.5px;top:868px" width="15" height="16" viewBox="0 0 15 16"><path d="M3.2 4.2A6 6 0 1 1 2 9.6" stroke="#374151" stroke-width="2" fill="none"/><path fill="#374151" d="M1 1.5v5.5h5.5z"/></svg>

<!-- graph edges -->
<svg class="a" style="left:329px;top:900px" width="1329" height="60" viewBox="0 0 1329 60">
  <g stroke="#c173e0" stroke-width="1.6">
    <path d="M336 27.7H425"/><path d="M530 27.7H650"/><path d="M797 27.7H917"/>
  </g>
  <g fill="#a950cf">
    <path d="M426 24.7l5.5 3-5.5 3z"/><path d="M651 24.7l5.5 3-5.5 3z"/><path d="M918 24.7l5.5 3-5.5 3z"/>
  </g>
</svg>
<!-- nodes -->
<div class="a" style="left:551px;top:917.4px;width:115px;height:20.8px;border-radius:5px;background:#63b443;"></div>
<div class="a" style="left:573.5px;top:919.5px;width:90.5px;height:17px;border-radius:0 3px 3px 0;background:#d3eac6"></div>
<svg class="a" style="left:556px;top:922px" width="15" height="13" viewBox="0 0 15 13"><g fill="#1f2535"><ellipse cx="6" cy="2" rx="6" ry="2"/><path d="M0 3.6C1.2 4.6 3.5 5.2 6 5.2s4.8-.6 6-1.6V5C11 6 9.5 6.6 8 6.9V8.3H7c-.3 0-.7.1-1 .1C3.5 8.4 1.2 7.8 0 6.8z"/><path d="M0 8.4c1.2 1 3.5 1.6 6 1.6h2v1.4h2v-.2c-1 .2-2.5 1.8-4 1.8C3.5 13 1.2 12.2 0 11.2z"/><path d="M7.5 8.4h4V6.2L15 9.3l-3.5 3.1V10.2h-4z"/></g></svg>
<div class="a" style="left:578.5px;top:919.8px;font-size:13px;font-weight:bold;line-height:15px;color:#2b3440;letter-spacing:-0.1px">airbnb.hosts</div>

<div class="a" style="left:761.5px;top:917.4px;width:97.5px;height:20.8px;border-radius:5px;background:#5abde2;"></div>
<div class="a" style="left:784px;top:919.5px;width:73px;height:17px;border-radius:0 3px 3px 0;background:#d1ebf6"></div>
<svg class="a" style="left:766.0px;top:921.3px" width="14.5" height="14" viewBox="0 0 14 14"><path fill="#1d2a35" d="M7 0L13.5 2.8Q14 3 14 3.6V10.4Q14 11 13.5 11.2L7 14L.5 11.2Q0 11 0 10.4V3.6Q0 3 .5 2.8z"/><path fill="#5abde2" d="M7 1.7L11.6 3.6L7 5.5L2.4 3.6z"/><path fill="#5abde2" d="M8 7.2L12.2 5.4V10.2L8 12.1z"/></svg>
<div class="a" style="left:788.5px;top:919.8px;font-size:13px;font-weight:bold;line-height:15px;color:#2b3440;letter-spacing:-0.1px">src_hosts</div>

<div class="a" style="left:985.5px;top:917.4px;width:141px;height:20.8px;border-radius:5px;background:#9b43c1;"></div>
<svg class="a" style="left:991.0px;top:921.3px" width="14.5" height="14" viewBox="0 0 14 14"><path fill="#fff" d="M7 0L13.5 2.8Q14 3 14 3.6V10.4Q14 11 13.5 11.2L7 14L.5 11.2Q0 11 0 10.4V3.6Q0 3 .5 2.8z"/><path fill="#9b43c1" d="M7 1.7L11.6 3.6L7 5.5L2.4 3.6z"/><path fill="#9b43c1" d="M8 7.2L12.2 5.4V10.2L8 12.1z"/></svg>
<div class="a" style="left:1012.5px;top:919.8px;font-size:13px;font-weight:bold;line-height:15px;color:#fff;letter-spacing:-0.1px">dim_hosts_clean</div>

<div class="a" style="left:1253.5px;top:917.4px;width:186px;height:20.8px;border-radius:5px;background:#5abde2;"></div>
<div class="a" style="left:1276.5px;top:919.5px;width:161px;height:17px;border-radius:0 3px 3px 0;background:#d1ebf6"></div>
<svg class="a" style="left:1258.5px;top:921.3px" width="14.5" height="14" viewBox="0 0 14 14"><path fill="#1d2a35" d="M7 0L13.5 2.8Q14 3 14 3.6V10.4Q14 11 13.5 11.2L7 14L.5 11.2Q0 11 0 10.4V3.6Q0 3 .5 2.8z"/><path fill="#5abde2" d="M7 1.7L11.6 3.6L7 5.5L2.4 3.6z"/><path fill="#5abde2" d="M8 7.2L12.2 5.4V10.2L8 12.1z"/></svg>
<div class="a" style="left:1281px;top:919.8px;font-size:13px;font-weight:bold;line-height:15px;color:#2b3440;letter-spacing:-0.1px">dim_listings_with_hosts</div>

<!-- status bar -->
<div class="a" style="left:0;top:990px;width:1658px;height:1.6px;background:#e5e7eb"></div>
<div class="a" style="left:0;top:992px;width:1658px;height:36px;background:#fff"></div>
<svg class="a" style="left:7px;top:1004px" width="15" height="10" viewBox="0 0 15 10"><path d="M1.2 8.5l6.3-6.5 6.3 6.5" stroke="#374151" stroke-width="2" fill="none"/></svg>
<div class="a" style="left:33px;top:992px;width:1px;height:36px;background:#e0e3e7"></div>
<div class="a" style="left:37px;top:996px;width:1495px;height:40px;border:1px solid #f7f8f9;border-radius:6px"></div>
<div class="a" style="left:50px;top:1004px;font-size:14px;line-height:16px;color:#4e5968;letter-spacing:-0.35px">dbt build --select &lt;model_name&gt;</div>
<div class="a" style="left:1539px;top:1000px;width:73px;height:24px;border-radius:12px;background:#cff5e1"></div>
<svg class="a" style="left:1550px;top:1005px" width="14" height="14" viewBox="0 0 14 14"><circle cx="7" cy="7" r="5.7" stroke="#3cc68a" stroke-width="1.4" fill="none"/></svg>
<div class="a" style="left:1569.5px;top:1004.5px;font-size:12px;line-height:15px;color:#1a6a46;letter-spacing:-0.8px">Ready</div>
<svg class="a" style="left:1634px;top:1003px" width="6" height="15" viewBox="0 0 6 15"><g fill="#374151"><circle cx="3" cy="2.3" r="1.75"/><circle cx="3" cy="7.3" r="1.75"/><circle cx="3" cy="12.3" r="1.75"/></g></svg>

<div class="a" style="left:329px;top:756px;width:1329px;height:1px;background:#cfd3d9"></div>
<!-- red annotation boxes -->
<div class="red" style="left:0;top:81px;width:331px;height:4px"></div>
<div class="red" style="left:0;top:81px;width:3px;height:282px"></div>
<div class="red" style="left:0;top:359px;width:331px;height:4px"></div>
<div class="red" style="left:327px;top:81px;width:4px;height:676px"></div>
<div class="red" style="left:327px;top:81px;width:1325px;height:4px"></div>
<div class="red" style="left:1648.5px;top:81px;width:4px;height:676px"></div>
<div class="red" style="left:327px;top:753px;width:1325px;height:4px"></div>
<div class="red" style="left:1557px;top:81px;width:4px;height:84px"></div>
<div class="red" style="left:1557px;top:161px;width:95px;height:4px"></div>
<div class="a" style="left:942.8px;top:365.5px;font-family:'Liberation Mono',monospace;font-weight:bold;font-size:28.5px;line-height:30px;letter-spacing:-2px;color:#ff1d17">1.</div>
<div class="a" style="left:1590.5px;top:131px;font-family:'Liberation Mono',monospace;font-weight:bold;font-size:28.5px;line-height:30px;letter-spacing:-2px;color:#ff1d17">2.</div>


</body></html>
